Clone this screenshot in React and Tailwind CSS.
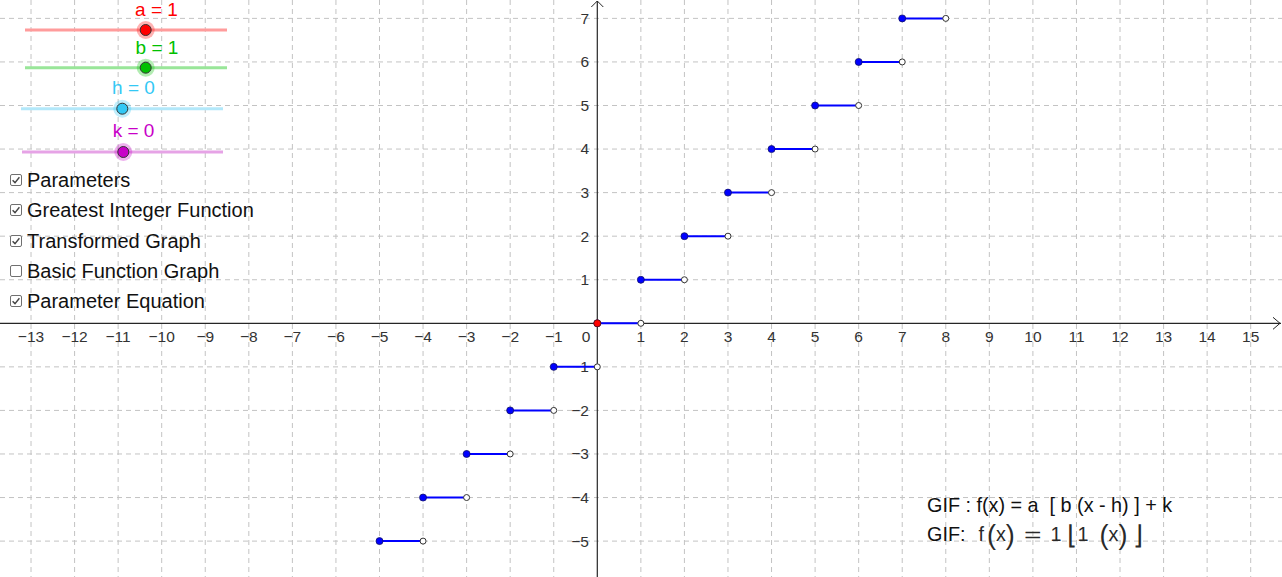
const OX = 597.3;
const OY = 323.3;
const S = 43.56;
const px = (x) => OX + x * S;
const py = (y) => OY - y * S;

const xs = [];
for (let i = -13; i <= 15; i++) xs.push(i);
const ys = [];
for (let i = -5; i <= 7; i++) ys.push(i);

const sliders = [
  { label: "a = 1", color: "#ff0000", line: "#ff9c9c", x1: 25, x2: 227, y: 30, pt: 145.7, lx: 156.5, ly: 9 },
  { label: "b = 1", color: "#00c000", line: "#99e699", x1: 25, x2: 227, y: 67.7, pt: 145.7, lx: 157, ly: 46.7 },
  { label: "h = 0", color: "#33c8f5", line: "#b3e8fa", x1: 21, x2: 223, y: 108.7, pt: 122.3, lx: 133.5, ly: 86.7 },
  { label: "k = 0", color: "#c800c8", line: "#e6a3e6", x1: 22, x2: 223, y: 152, pt: 123.3, lx: 133.5, ly: 130 },
];

const options = [
  { text: "Parameters", on: true },
  { text: "Greatest Integer Function", on: true },
  { text: "Transformed Graph", on: true },
  { text: "Basic Function Graph", on: false },
  { text: "Parameter Equation", on: true },
];

function Box({ on }) {
  return (
    <span className="w-[12px] h-[12px] border-[1.5px] border-[#707070] rounded-[2px] bg-white flex items-center justify-center shrink-0">
      {on && (
        <svg width="10" height="10" viewBox="0 0 10 10">
          <path d="M1.6 5.2 L4 7.6 L8.4 2.2" fill="none" stroke="#444" strokeWidth="1.4" />
        </svg>
      )}
    </span>
  );
}

export default function App() {
  const font = { fontFamily: '"Liberation Sans", Arial, sans-serif' };
  return (
    <div className="relative w-[1282px] h-[577px] overflow-hidden bg-white" style={font}>
      <svg className="absolute inset-0" width="1282" height="577">
        {/* grid */}
        {xs.filter((n) => n !== 0).map((n) => (
          <line key={"gx" + n} x1={px(n)} y1="0" x2={px(n)} y2="577" stroke="#c3c3c3" strokeWidth="1" strokeDasharray="5 4" />
        ))}
        {ys.filter((n) => n !== 0).map((n) => (
          <line key={"gy" + n} x1="0" y1={py(n)} x2="1282" y2={py(n)} stroke="#c3c3c3" strokeWidth="1" strokeDasharray="5 4" />
        ))}

        {/* axes */}
        <line x1="0" y1={OY} x2="1281" y2={OY} stroke="#252525" strokeWidth="1.2" />
        <line x1={OX} y1="1" x2={OX} y2="577" stroke="#252525" strokeWidth="1.2" />
        <path d={`M1273 ${OY - 6} L1280 ${OY} L1273 ${OY + 6}`} fill="none" stroke="#252525" strokeWidth="1" />
        <path d={`M${OX - 6} 7 L${OX} 1 L${OX + 6} 7`} fill="none" stroke="#252525" strokeWidth="1" />

        {/* axis labels */}
        {xs.filter((n) => n !== 0).map((n) => (
          <text key={"lx" + n} x={px(n)} y="342" textAnchor="middle" fontSize="15.5" fill="#333">
            {n < 0 ? "\u2212" + -n : n}
          </text>
        ))}
        {ys.filter((n) => n !== 0).map((n) => (
          <text key={"ly" + n} x="589" y={py(n) + 5.4} textAnchor="end" fontSize="15.5" fill="#333">
            {n < 0 ? "\u2212" + -n : n}
          </text>
        ))}
        <text x="586" y="342" textAnchor="middle" fontSize="15.5" fill="#333">0</text>

        {/* step function */}
        {ys.map((n) => (
          <line key={"s" + n} x1={px(n)} y1={py(n)} x2={px(n + 1)} y2={py(n)} stroke="#0000ff" strokeWidth="2" />
        ))}
        {ys.map((n) => (
          <g key={"p" + n}>
            <circle cx={px(n + 1)} cy={py(n)} r="3" fill="#fff" stroke="#333" strokeWidth="1" />
            <circle cx={px(n)} cy={py(n)} r="3.5" fill="#0000ff" stroke="#10106a" strokeWidth="0.8" />
          </g>
        ))}
        <circle cx={OX} cy={OY} r="3.5" fill="#ff0000" stroke="#5a1010" strokeWidth="0.8" />

        {/* sliders */}
        {sliders.map((s) => (
          <g key={s.label}>
            <line x1={s.x1} y1={s.y} x2={s.x2} y2={s.y} stroke={s.line} strokeWidth="3" />
            <circle cx={s.pt} cy={s.y} r="9" fill={s.color} opacity="0.3" />
            <circle cx={s.pt} cy={s.y} r="5.5" fill={s.color} stroke="#333" strokeWidth="1" />
            <text x={s.lx} y={s.ly + 6.8} textAnchor="middle" fontSize="19" fill={s.color}>
              {s.label}
            </text>
          </g>
        ))}
      </svg>

      {/* checkbox panel */}
      <div className="absolute left-[10px] top-[165px] flex flex-col">
        {options.map((o) => (
          <div key={o.text} className="h-[30.25px] flex items-center gap-[5px] text-[20px] text-[#111] leading-none">
            <Box on={o.on} />
            <span>{o.text}</span>
          </div>
        ))}
      </div>

      {/* equations */}
      <div className="absolute left-[927px] top-[491px] flex flex-col text-[19.8px] text-[#111] leading-none">
        <div className="h-[29px] flex items-center whitespace-pre">GIF : f(x) = a  [ b (x - h) ] + k</div>
        <div className="h-[30px] flex items-center whitespace-pre text-[#2a2a2a]">
          <span className="text-[#111]">GIF:</span>
          <span className="ml-[13px]">f</span>
          <span className="ml-[3px] text-[27px]">(</span>
          <span>x</span>
          <span className="text-[27px]">)</span>
          <span className="ml-[12px] inline-block scale-x-[1.5] text-[20px]">=</span>
          <span className="ml-[12px]">1</span>
          <span className="ml-[5px] text-[26px]">⌊</span>
          <span className="ml-[1px]">1</span>
          <span className="ml-[11px] text-[27px]">(</span>
          <span>x</span>
          <span className="text-[27px]">)</span>
          <span className="ml-[6px] text-[26px]">⌋</span>
        </div>
      </div>
    </div>
  );
}
